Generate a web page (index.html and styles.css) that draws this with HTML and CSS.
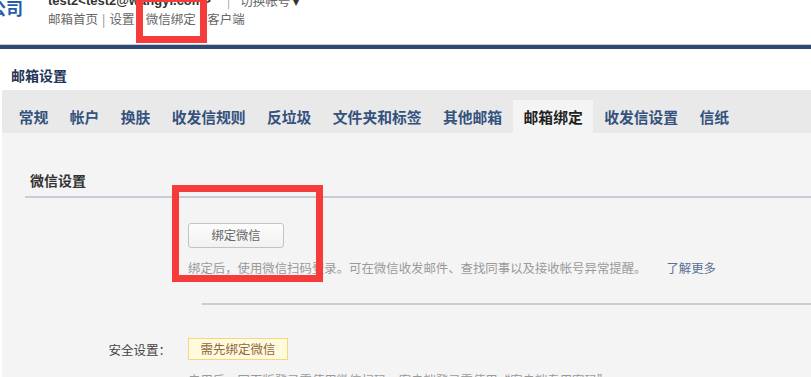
FILE: index.html
```html
<!DOCTYPE html>
<html lang="zh-CN">
<head>
<meta charset="utf-8">
<title>邮箱设置</title>
<link rel="stylesheet" href="styles.css">
</head>
<body>
<div class="page">
  <header class="header">
    <div class="logo"><span>某某公司</span></div>
    <div class="user">
      <div class="user-line1">
        <span class="user-name">test2&lt;test2@wangyi.com&gt;</span>
        <span class="sep1">|</span>
        <span class="switch">切换帐号</span>
        <span class="caret">▾</span>
      </div>
      <nav class="user-links">
        <a class="ulink">邮箱首页</a><span class="usep">|</span><a class="ulink">设置</a><span class="usep">|</span><a class="ulink">微信绑定</a><span class="usep">|</span><a class="ulink">客户端</a>
      </nav>
    </div>
  </header>
  <div class="topbar"></div>
  <h1 class="title">邮箱设置</h1>
  <div class="tabs">
    <span class="tab">常规</span>
    <span class="tab">帐户</span>
    <span class="tab">换肤</span>
    <span class="tab">收发信规则</span>
    <span class="tab">反垃圾</span>
    <span class="tab">文件夹和标签</span>
    <span class="tab">其他邮箱</span>
    <span class="tab active">邮箱绑定</span>
    <span class="tab">收发信设置</span>
    <span class="tab">信纸</span>
  </div>
  <main class="content">
    <div class="section-title">微信设置</div>
    <div class="row row-bind">
      <div class="label"></div>
      <div class="value">
        <button class="btn">绑定微信</button>
        <p class="desc">绑定后，使用微信扫码登录。可在微信收发邮件、查找同事以及接收帐号异常提醒。<a class="more">了解更多</a></p>
      </div>
    </div>
    <div class="divider"></div>
    <div class="row row-safe">
      <div class="label">安全设置：</div>
      <div class="value">
        <span class="badge">需先绑定微信</span>
        <p class="desc">启用后，网页版登录需使用微信扫码；客户端登录需使用“客户端专用密码”</p>
      </div>
    </div>
  </main>
  <div class="mark mark-top"></div>
  <div class="mark mark-btn"></div>
</div>
</body>
</html>
```
FILE: styles.css
```css
html, body {
  margin: 0;
  padding: 0;
  background: #ffffff;
}
body {
  font-family: "Noto Sans CJK SC", "Liberation Sans", sans-serif;
  color: #333;
}
.page {
  position: relative;
  width: 811px;
  height: 377px;
  overflow: hidden;
}
.header {
  display: flex;
  height: 44px;
}
.logo {
  width: 23px;
  overflow: hidden;
  display: flex;
  justify-content: flex-end;
  white-space: nowrap;
  font-size: 17px;
  font-weight: bold;
  line-height: 20px;
  margin-top: -2px;
  height: 22px;
  color: #1f5ea8;
}
.user {
  margin-left: 25px;
  display: flex;
  flex-direction: column;
}
.user-line1 {
  margin-top: -9px;
  height: 19px;
  line-height: 19px;
  display: flex;
  align-items: center;
  white-space: nowrap;
}
.user-name {
  font-family: "Liberation Sans", "Noto Sans CJK SC", sans-serif;
  font-weight: bold;
  font-size: 13px;
  color: #333;
}
.sep1 {
  margin-left: 16px;
  color: #999;
  font-size: 12px;
}
.switch {
  margin-left: 10px;
  font-size: 12.5px;
  color: #666;
}
.caret {
  margin-left: 3px;
  font-size: 12px;
  color: #333;
}
.user-links {
  height: 18px;
  line-height: 18px;
  font-size: 12.5px;
  color: #666;
  white-space: nowrap;
}
.ulink {
  color: #666;
}
.usep {
  margin: 0 4px;
  color: #888;
}
.topbar {
  height: 5px;
  background: #2f4a72;
  border-top: 1px solid #c5ccd6;
  box-sizing: border-box;
}
.title {
  margin: 0;
  height: 41px;
  box-sizing: border-box;
  padding: 16px 0 0 11px;
  font-size: 14px;
  line-height: 20px;
  font-weight: bold;
  color: #1f3558;
}
.tabs {
  margin-left: 2px;
  height: 43px;
  background: #e9e9e9;
  display: flex;
  align-items: flex-end;
  padding-left: 6px;
}
.tab {
  height: 33px;
  line-height: 33px;
  padding: 0 10.7px;
  font-size: 14.8px;
  font-weight: bold;
  color: #34527d;
  white-space: nowrap;
}
.tab.active {
  background: #f4f4f4;
  color: #222;
}
.content {
  margin-left: 2px;
  height: 244px;
  background: #f4f4f4;
  padding-top: 35px;
  box-sizing: border-box;
}
.section-title {
  margin-left: 23px;
  padding: 0 0 4px 5px;
  line-height: 24px;
  font-size: 14px;
  font-weight: bold;
  color: #333;
  border-bottom: 2px solid #c9cdd9;
}
.row {
  display: grid;
  grid-template-columns: 169px 1fr;
  column-gap: 17px;
}
.row-bind {
  margin-top: 25px;
}
.label {
  text-align: right;
  font-size: 12.5px;
  color: #444;
  line-height: 22px;
  white-space: nowrap;
}
.value {
  display: flex;
  flex-direction: column;
  align-items: flex-start;
}
.btn {
  width: 96px;
  height: 25px;
  padding: 0;
  border: 1px solid #c3c3c3;
  border-radius: 3px;
  background: linear-gradient(#fdfdfd, #f1f1f1);
  font-family: "Noto Sans CJK SC", sans-serif;
  font-size: 12.3px;
  color: #666;
  line-height: 23px;
}
.desc {
  margin: 10px 0 0;
  line-height: 20px;
  font-size: 12.4px;
  color: #9a9a9a;
  white-space: nowrap;
}
.more {
  margin-left: 20px;
  color: #5b6f94;
}
.divider {
  margin: 25px 0 0 200px;
  height: 2px;
  background: #c9cdd9;
}
.row-safe {
  margin-top: 33px;
}
.row-safe .label {
  padding-top: 1px;
}
.badge {
  height: 22px;
  box-sizing: border-box;
  line-height: 20px;
  padding: 0 11.5px;
  border: 1px solid #f3d880;
  background: #fff9de;
  font-size: 12.5px;
  color: #8d6a3c;
}
.mark {
  position: absolute;
  border: 7px solid #f63b3b;
  box-sizing: border-box;
}
.mark-top {
  left: 136px;
  top: -5px;
  width: 71px;
  height: 48px;
}
.mark-btn {
  left: 172px;
  top: 185px;
  width: 151px;
  height: 97px;
}
```
